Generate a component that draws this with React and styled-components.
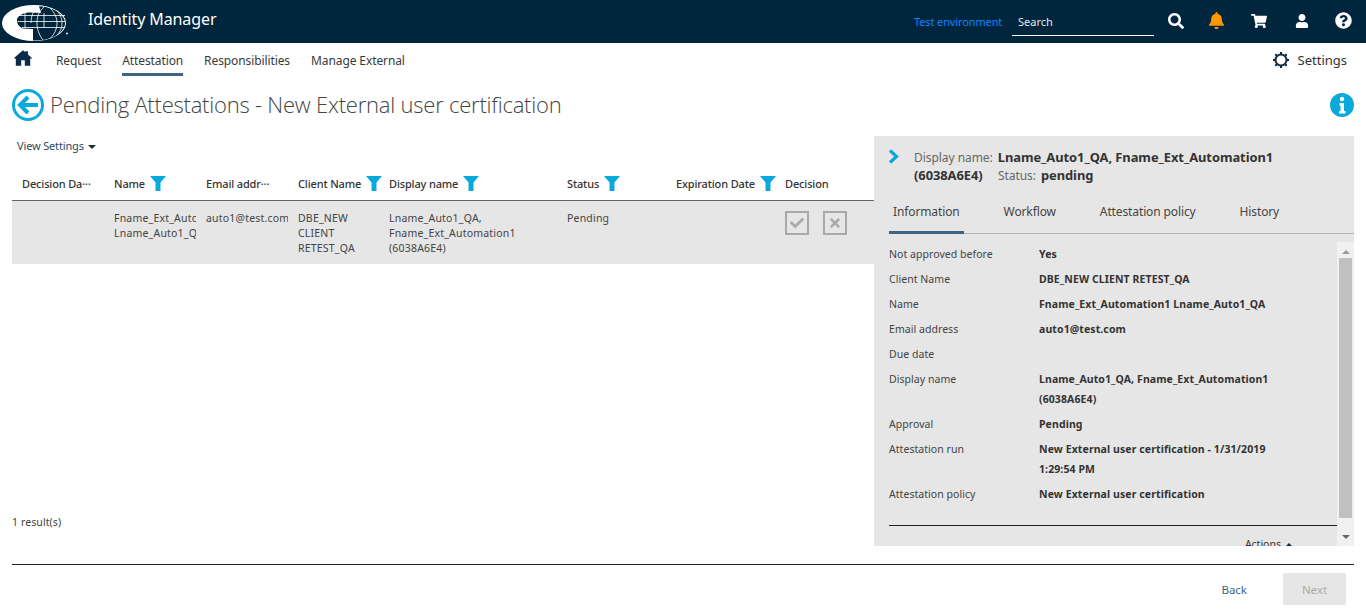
import React from "react";
import styled, { createGlobalStyle } from "styled-components";
import { FaSearch, FaBell, FaShoppingCart, FaUser, FaQuestionCircle, FaCheck, FaTimes } from "react-icons/fa";

const Global = createGlobalStyle`
  html, body { margin: 0; padding: 0; background: #fff; }
  body { font-family: "Noto Sans", "Liberation Sans", sans-serif; font-size: 12px; color: #333; overflow: hidden; }
  * { box-sizing: border-box; }
`;

const Page = styled.div`
  width: 1366px; height: 613px; display: flex; flex-direction: column; overflow: hidden;
`;
const Header = styled.header`
  height: 43px; background: #00263e; display: flex; align-items: center; color: #fff; flex: none;
`;
const Logo = styled.svg`
  width: 70px; height: 43px; flex: none;
`;
const Product = styled.div`
  margin-left: 18px; font-size: 16px; letter-spacing: -0.1px; flex: 1; padding-bottom: 5px;
`;
const Env = styled.div`
  color: #0a84ff; font-size: 11px; width: 98px; margin-top: -1px; white-space: nowrap; letter-spacing: -0.12px;
`;
const SearchBox = styled.div`
  width: 142px; height: 27px; border-bottom: 1px solid #fff; padding: 5px 6px 0; font-size: 11px; margin-top: 1px; color: #e8e8e8;
`;
const HeaderIcons = styled.div`
  display: flex; align-items: center; margin: 0 14px 0 0;
`;
const HeaderIcon = styled.span`
  width: ${p => p.$w}px; display: flex; justify-content: flex-end; color: ${p => p.$c || "#fff"}; font-size: ${p => p.$s || 16}px; margin-top: -2px;
`;
const Nav = styled.nav`
  height: 36px; display: flex; align-items: flex-start; padding: 0 19px 0 14px; flex: none;
`;
const HomeLink = styled.span`
  width: 42px; display: flex; padding-top: 6px;
`;
const NavItem = styled.a`
  height: 33px; margin-right: 21px; padding-top: 9px; font-size: 12px; line-height: 17px; letter-spacing: -0.1px; color: #3a3a3a;
  border-bottom: 3px solid ${p => (p.$active ? "#3f6482" : "transparent")};
`;
const SettingsLink = styled.div`
  margin-left: auto; display: flex; align-items: center; gap: 9px; font-size: 13px; color: #333; height: 34px;
`;
const TitleRow = styled.div`
  height: 57px; display: flex; align-items: flex-start; padding: 10px 12px 0; flex: none;
`;
const Title = styled.h1`
  margin: -1px 0 0 6px; font-weight: 300; font-size: 22px; line-height: 32px; color: #444; font-family: "Open Sans", sans-serif; flex: 1; letter-spacing: -0.22px; white-space: nowrap;
`;
const InfoIcon = styled.svg`
  width: 24px; height: 24px; margin-top: 4px; flex: none;
`;
const Main = styled.main`
  flex: none; height: 410px; display: flex; padding: 0 12px;
`;
const Left = styled.section`
  width: 862px; display: flex; flex-direction: column; flex: none;
`;
const ViewSettings = styled.div`
  height: 32px; padding: 2px 0 0 5px; font-size: 11px; line-height: 16px; letter-spacing: -0.15px; color: #2f4a5c; display: flex; align-items: flex-start; gap: 4px;
`;
const Caret = styled.i`
  display: inline-block; width: 0; height: 0; border-left: 4px solid transparent; border-right: 4px solid transparent;
  border-top: 4px solid #1b2b38; margin-top: 7px;
`;
const UpCaret = styled.i`
  display: inline-block; width: 0; height: 0; border-left: 3px solid transparent; border-right: 3px solid transparent;
  border-bottom: 3px solid #1b2b38; margin-top: 7px;
`;
const grid = "92px 92px 92px 91px 178px 109px 109px 99px";
const HeadRow = styled.div`
  display: grid; grid-template-columns: ${grid}; height: 33px; border-bottom: 1px solid #666; align-items: flex-start;
`;
const HeadCell = styled.div`
  padding: 7px 0 0 10px; font-size: 11px; line-height: 18px; font-weight: 500; color: #333; display: flex; align-items: flex-start; gap: 5px; white-space: nowrap;
`;
const HeadLabel = styled.span`
  letter-spacing: -0.15px; flex: none;
`;
const Funnel = styled.svg`
  width: 16px; height: 15px; flex: none; margin-top: 1px;
`;
const BodyRow = styled.div`
  display: grid; grid-template-columns: ${grid}; height: 63px; background: #e6e6e6;
`;
const Cell = styled.div`
  padding: 10px 0 0 10px; font-size: 10.5px; line-height: 15px; letter-spacing: 0.2px; color: #444; overflow: hidden; white-space: ${p => (p.$nowrap ? "nowrap" : "normal")};
`;
const Decision = styled.div`
  display: flex; gap: 14px; padding: 10px 0 0 10px;
`;
const DecisionBtn = styled.span`
  width: 24px; height: 24px; border: 2px solid #a9a9a9; color: #a9a9a9; display: flex; align-items: center; justify-content: center; font-size: 14px;
`;
const Results = styled.div`
  margin-top: auto; font-size: 10.5px; line-height: 14px; letter-spacing: 0.1px; color: #444; padding-bottom: 17px;
`;
const Panel = styled.aside`
  width: 480px; background: #e6e6e6; display: flex; flex-direction: column; overflow: hidden; flex: none;
`;
const PanelHead = styled.div`
  height: 62px; padding: 12px 60px 0 15px; display: flex; gap: 14px; flex: none;
`;
const Chevron = styled.svg`
  width: 11px; height: 15px; flex: none; margin: 1px 1px 0 -1px;
`;
const PanelTitle = styled.div`
  font-size: 12.9px; line-height: 18px; font-weight: 700; color: #333; letter-spacing: -0.05px;
`;
const Muted = styled.span`
  font-size: 12px; line-height: 1; font-weight: 400; color: #666; margin-right: 5px; margin-left: ${p => (p.$second ? 12 : 0)}px;
`;
const Tabs = styled.div`
  height: 36px; margin-left: 15px; border-bottom: 1px solid #b5b5b5; display: flex; gap: 36px; flex: none;
`;
const Tab = styled.div`
  height: 36px; padding: 5px 4px 0; font-size: 12px; line-height: 18px; color: #444; letter-spacing: -0.12px; border-bottom: 3px solid ${p => (p.$active ? "#3f6482" : "transparent")};
`;
const PanelBody = styled.div`
  flex: 1; display: flex; min-height: 0; padding-top: 8px;
`;
const Details = styled.div`
  flex: 1; padding: 2px 0 0 15px; display: flex; flex-direction: column; min-width: 0;
`;
const DetailRow = styled.div`
  display: grid; grid-template-columns: 150px 244px; padding: 0 0 5px; line-height: 20px; font-size: 10.5px; flex: none;
`;
const Label = styled.div`
  color: #444; white-space: nowrap; letter-spacing: 0.05px;
`;
const Value = styled.div`
  font-weight: 700; color: #333; letter-spacing: 0.1px;
`;
const Rule = styled.div`
  border-top: 1px solid #222; margin-top: 16px; flex: none;
`;
const Actions = styled.div`
  display: flex; justify-content: flex-end; gap: 5px; padding: 10px 45px 0 0; font-size: 10.5px; line-height: 16px; color: #333;
`;
const Scrollbar = styled.div`
  width: 17px; background: #f1f1f1; display: flex; flex-direction: column; align-items: center; flex: none;
`;
const ScrollUp = styled.i`
  width: 0; height: 0; flex: none; border-left: 4px solid transparent; border-right: 4px solid transparent;
  border-bottom: 4px solid #999; margin: 8px 0 4px;
`;
const ScrollDown = styled.i`
  width: 0; height: 0; flex: none; border-left: 4px solid transparent; border-right: 4px solid transparent;
  border-top: 4px solid #666; margin: auto 0 7px;
`;
const Thumb = styled.div`
  width: 13px; height: 260px; background: #c1c1c1; flex: none;
`;
const Footer = styled.footer`
  margin: 18px 12px 0; border-top: 1px solid #222; padding: 8px 8px 0 0; display: flex; justify-content: flex-end; align-items: center; gap: 36px; flex: none;
`;
const Back = styled.span`
  color: #3f6482; font-size: 11.5px;
`;
const Next = styled.span`
  width: 63px; height: 32px; background: #e6e6e6; color: #aaa; border-radius: 2px; font-size: 11.5px; display: flex; align-items: center; justify-content: center;
`;

const FilterIcon = () => (
  <Funnel viewBox="0 0 16 15"><path d="M0 0h16l-5.500 6.500V15h-5V6.500z" fill="#0aa9dc" /></Funnel>
);
const Globe = () => (
  <Logo viewBox="0 0 70 43">
    <ellipse cx="34" cy="23" rx="32" ry="18" fill="#fff" />
    <path d="M39 6.200C53 7 65 14 65 23c0 9-12 16-24 17.300L33 40.500V29l-10-.5c-4-1.500-6.500-5-6-9.500 2-4 7-6.500 13-6.500l11 .5z" fill="#00263e" />
    <path d="M19 15.500h46M17.500 21.500h47.500M22 27.500h43M38 6.500c-5 4-7 10-7 16.500M44 6.800C38 12 37 18 37 23c0 6 2 12 6 17M50 8c5 5 7 10 7 15s-2 11-7 15.500M57 11c4 4 5 8 5 12s-1 8-5 12M44 13v15M25 13v15" stroke="#fff" strokeWidth="0.800" fill="none" />
    <circle cx="67" cy="33.500" r="0.900" fill="#fff" />
  </Logo>
);
const BackIcon = () => (
  <svg width="32" height="32" viewBox="0 0 32 32" style={{ flex: "none" }}>
    <circle cx="16" cy="16" r="14.500" fill="#fff" stroke="#0aa9dc" strokeWidth="3" />
    <path d="M8 16h18M16 8l-8 8 8 8" stroke="#0aa9dc" strokeWidth="4" fill="none" />
  </svg>
);
const HomeIcon = () => (
  <svg width="18" height="18" viewBox="2 3 20 17"><path d="M10 20v-6h4v6h6v-8h2.500L17.500 7.500V4h-3v1L12 3 1.500 12H4v8z" fill="#0c2a4a" /></svg>
);
const Gear = () => (
  <svg width="16" height="16" viewBox="0 0 16 16">
    <circle cx="8" cy="8" r="5.500" fill="none" stroke="#12293f" strokeWidth="2" />
    <path d="M8 0v3M8 13v3M0 8h3M13 8h3M2.300 2.300l2 2M11.700 11.700l2 2M13.700 2.300l-2 2M4.300 11.700l-2 2" stroke="#12293f" strokeWidth="2" />
  </svg>
);

const head = [
  ["Decision Da···", false], ["Name", true], ["Email addr···", false], ["Client Name", true],
  ["Display name", true], ["Status", true], ["Expiration Date", true], ["Decision", false],
];
const details = [
  ["Not approved before", "Yes"],
  ["Client Name", "DBE_NEW CLIENT RETEST_QA"],
  ["Name", "Fname_Ext_Automation1 Lname_Auto1_QA"],
  ["Email address", "auto1@test.com"],
  ["Due date", "\u00a0"],
  ["Display name", "Lname_Auto1_QA, Fname_Ext_Automation1 (6038A6E4)"],
  ["Approval", "Pending"],
  ["Attestation run", "New External user certification - 1/31/2019 1:29:54 PM"],
  ["Attestation policy", "New External user certification"],
];

export default function App() {
  return (
    <Page>
      <Global />
      <Header>
        <Globe />
        <Product>Identity Manager</Product>
        <Env>Test environment</Env>
        <SearchBox>Search</SearchBox>
        <HeaderIcons>
          <HeaderIcon $w={30}><FaSearch /></HeaderIcon>
          <HeaderIcon $w={41} $c="#ff9800" $s={17}><FaBell /></HeaderIcon>
          <HeaderIcon $w={42}><FaShoppingCart /></HeaderIcon>
          <HeaderIcon $w={42} $s={14}><FaUser /></HeaderIcon>
          <HeaderIcon $w={43} $s={17}><FaQuestionCircle /></HeaderIcon>
        </HeaderIcons>
      </Header>
      <Nav>
        <HomeLink><HomeIcon /></HomeLink>
        <NavItem>Request</NavItem>
        <NavItem $active>Attestation</NavItem>
        <NavItem>Responsibilities</NavItem>
        <NavItem>Manage External</NavItem>
        <SettingsLink><Gear />Settings</SettingsLink>
      </Nav>
      <TitleRow>
        <BackIcon />
        <Title>Pending Attestations - New External user certification</Title>
        <InfoIcon viewBox="0 0 24 24">
          <circle cx="12" cy="12" r="12" fill="#0aa9dc" />
          <circle cx="12" cy="6" r="2.200" fill="#fff" />
          <path d="M9.500 10H14v8h1.500v2.500h-6.500V18h1.500v-5.500h-1z" fill="#fff" />
        </InfoIcon>
      </TitleRow>
      <Main>
        <Left>
          <ViewSettings>View Settings <Caret /></ViewSettings>
          <HeadRow>
            {head.map(([t, f]) => (
              <HeadCell key={t}><HeadLabel>{t}</HeadLabel>{f && <FilterIcon />}</HeadCell>
            ))}
          </HeadRow>
          <BodyRow>
            <Cell />
            <Cell $nowrap>Fname_Ext_Automation1<br />Lname_Auto1_QA</Cell>
            <Cell $nowrap>auto1@test.com</Cell>
            <Cell>DBE_NEW<br />CLIENT<br />RETEST_QA</Cell>
            <Cell>Lname_Auto1_QA,<br />Fname_Ext_Automation1<br />(6038A6E4)</Cell>
            <Cell>Pending</Cell>
            <Cell />
            <Decision>
              <DecisionBtn><FaCheck /></DecisionBtn>
              <DecisionBtn><FaTimes /></DecisionBtn>
            </Decision>
          </BodyRow>
          <Results>1 result(s)</Results>
        </Left>
        <Panel>
          <PanelHead>
            <Chevron viewBox="0 0 11 15"><path d="M2 1.500L8.500 7.500 2 13.500" stroke="#0aa9dc" strokeWidth="3.200" fill="none" /></Chevron>
            <PanelTitle>
              <Muted>Display name:</Muted>Lname_Auto1_QA, Fname_Ext_Automation1 (6038A6E4) <Muted $second>Status:</Muted>pending
            </PanelTitle>
          </PanelHead>
          <Tabs>
            <Tab $active>Information</Tab>
            <Tab>Workflow</Tab>
            <Tab>Attestation policy</Tab>
            <Tab>History</Tab>
          </Tabs>
          <PanelBody>
            <Details>
              {details.map(([l, v]) => (
                <DetailRow key={l}><Label>{l}</Label><Value>{v}</Value></DetailRow>
              ))}
              <Rule />
              <Actions>Actions <UpCaret /></Actions>
            </Details>
            <Scrollbar>
              <ScrollUp />
              <Thumb />
              <ScrollDown />
            </Scrollbar>
          </PanelBody>
        </Panel>
      </Main>
      <Footer>
        <Back>Back</Back>
        <Next>Next</Next>
      </Footer>
    </Page>
  );
}
